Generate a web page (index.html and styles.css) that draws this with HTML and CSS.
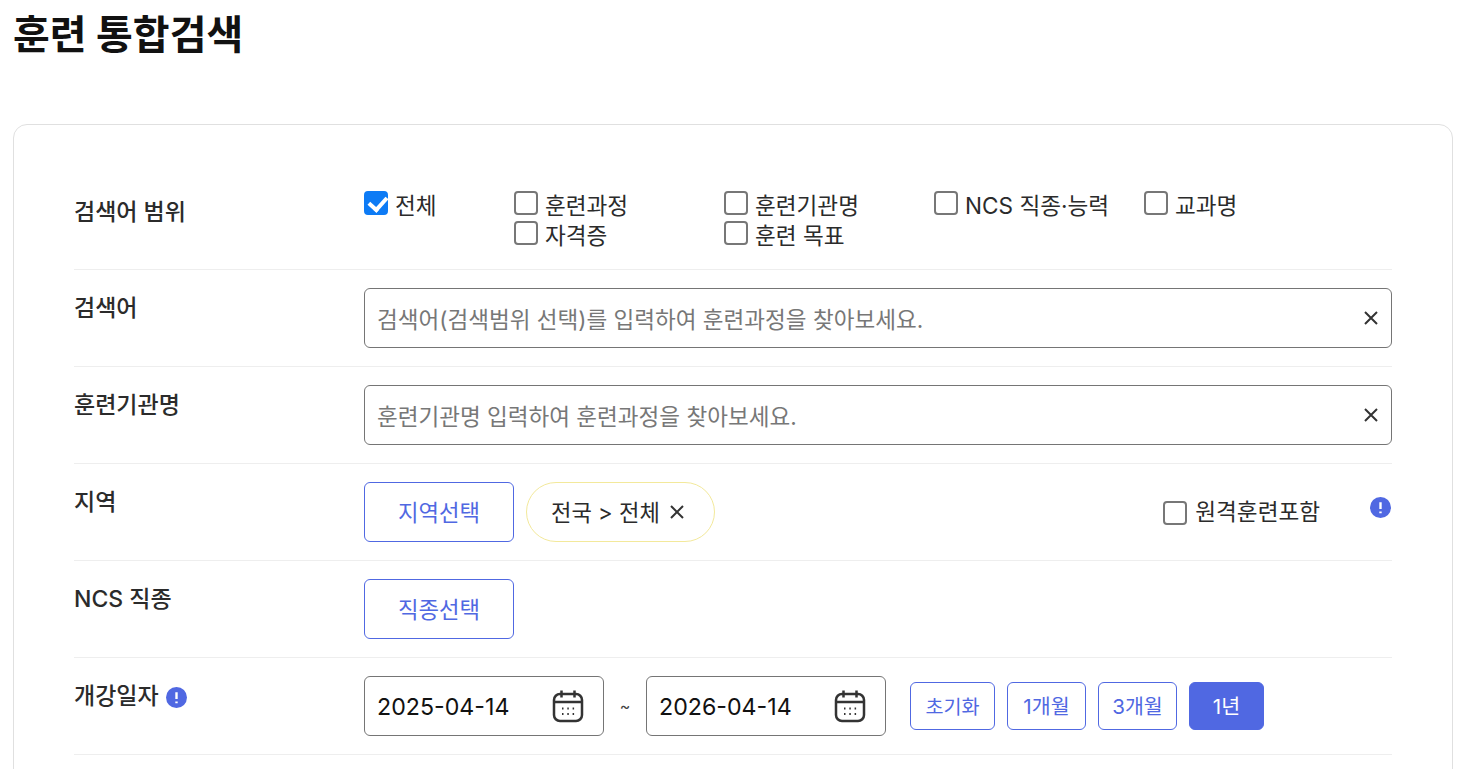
FILE: index.html
```html
<!DOCTYPE html>
<html lang="ko">
<head>
<meta charset="utf-8">
<title>훈련 통합검색</title>
<link rel="stylesheet" href="styles.css">
</head>
<body>
<main class="page">
  <h1 class="title">훈련 통합검색</h1>
  <form class="card">
    <div class="row row-scope">
      <div class="label">검색어 범위</div>
      <div class="scope">
        <label class="check"><input type="checkbox" checked><span>전체</span></label>
        <div class="scope-grid">
          <label class="check"><input type="checkbox"><span>훈련과정</span></label>
          <label class="check"><input type="checkbox"><span>훈련기관명</span></label>
          <label class="check"><input type="checkbox"><span>NCS 직종·능력</span></label>
          <label class="check"><input type="checkbox"><span>교과명</span></label>
          <label class="check"><input type="checkbox"><span>자격증</span></label>
          <label class="check"><input type="checkbox"><span>훈련 목표</span></label>
        </div>
      </div>
    </div>
    <div class="row">
      <div class="label">검색어</div>
      <div class="field">
        <span class="placeholder">검색어(검색범위 선택)를 입력하여 훈련과정을 찾아보세요.</span>
        <svg class="clear" viewBox="0 0 14 14"><path d="M1 1l12 12M13 1L1 13"/></svg>
      </div>
    </div>
    <div class="row">
      <div class="label">훈련기관명</div>
      <div class="field">
        <span class="placeholder">훈련기관명 입력하여 훈련과정을 찾아보세요.</span>
        <svg class="clear" viewBox="0 0 14 14"><path d="M1 1l12 12M13 1L1 13"/></svg>
      </div>
    </div>
    <div class="row">
      <div class="label">지역</div>
      <div class="controls">
        <button type="button" class="pick">지역선택</button>
        <span class="tag">전국 &gt; 전체<svg class="clear" viewBox="0 0 14 14"><path d="M1 1l12 12M13 1L1 13"/></svg></span>
        <label class="check remote"><input type="checkbox"><span>원격훈련포함</span></label>
        <svg class="info info-remote" viewBox="0 0 22 22"><circle cx="11" cy="11" r="11"/><path class="bang" d="M11 5.500v7M11 15.200v1.800"/></svg>
      </div>
    </div>
    <div class="row">
      <div class="label">NCS 직종</div>
      <div class="controls">
        <button type="button" class="pick">직종선택</button>
      </div>
    </div>
    <div class="row">
      <div class="label">개강일자<svg class="info info-label" viewBox="0 0 22 22"><circle cx="11" cy="11" r="11"/><path class="bang" d="M11 5.500v7M11 15.200v1.800"/></svg></div>
      <div class="controls">
        <div class="date"><span class="date-text">2025-04-14</span>
          <svg class="cal" viewBox="0 0 32 34"><rect x="2" y="5" width="28" height="27" rx="6"/><path d="M2 13h28M9.500 1.500v7M22.500 1.500v7"/><path class="dots" d="M10 19.500h1.500M15.300 19.500h1.500M20.600 19.500h1.500M10 25h1.500M15.300 25h1.500M20.600 25h1.500"/></svg>
        </div>
        <span class="tilde">~</span>
        <div class="date"><span class="date-text">2026-04-14</span>
          <svg class="cal" viewBox="0 0 32 34"><rect x="2" y="5" width="28" height="27" rx="6"/><path d="M2 13h28M9.500 1.500v7M22.500 1.500v7"/><path class="dots" d="M10 19.500h1.500M15.300 19.500h1.500M20.600 19.500h1.500M10 25h1.500M15.300 25h1.500M20.600 25h1.500"/></svg>
        </div>
        <div class="ranges">
          <button type="button" class="range range-reset">초기화</button>
          <button type="button" class="range">1개월</button>
          <button type="button" class="range">3개월</button>
          <button type="button" class="range range-on">1년</button>
        </div>
      </div>
    </div>
  </form>
</main>
</body>
</html>
```
FILE: styles.css
```css
* { box-sizing: border-box; }
html, body { margin: 0; height: 769px; overflow: hidden; background: #fff; }
body { font-family: Inter, "Noto Sans CJK KR", "Noto Sans", sans-serif; color: #222; }
.page { padding: 0 19px 0 13px; }
.title { margin: 0; height: 124px; padding-top: 8px; font-size: 40px; line-height: 54px; font-weight: 700; color: #111; }
.card { border: 1px solid #e0e0e0; border-radius: 14px; padding: 47px 60px 200px; }
.row { display: flex; padding: 18px 0; border-bottom: 1px solid #eee; min-height: 97px; }
.row-scope { min-height: 98px; padding-bottom: 19px; }
.label { width: 290px; flex: none; font-size: 23px; line-height: 41px; font-weight: 500; color: #2b2b2b; display: flex; align-items: flex-start; }
.row-scope .label { line-height: 44px; }
.scope { display: flex; align-items: flex-start; height: 60px; }
.scope > .check { width: 150px; }
.scope-grid { display: grid; grid-template-columns: 210px 210px 210px auto; }
.check { display: flex; align-items: center; height: 30px; font-size: 22.600px; line-height: 28px; gap: 7px; color: #2b2b2b; }
.check span { position: relative; top: 1px; }
.check input { appearance: none; margin: 0; width: 24px; height: 24px; flex: none; border: 2px solid #777; border-radius: 4px; background: #fff; position: relative; top: -2px; }
.check input:checked { border-color: #0d7bf5; background: #0d7bf5; }
.check input:checked::after { content: ""; position: absolute; left: 6px; top: 0; width: 8px; height: 14px; border: solid #fff; border-width: 0 4px 4px 0; transform: rotate(42deg); }
.field { flex: 1; height: 60px; border: 1px solid #757575; border-radius: 6px; display: flex; align-items: center; justify-content: space-between; padding: 0 13px 0 12px; }
.placeholder { font-size: 22.550px; color: #777; }
.clear { width: 14px; height: 14px; fill: none; stroke: #333; stroke-width: 2; flex: none; }
.controls { flex: 1; display: flex; align-items: center; height: 60px; }
.pick { width: 150px; height: 60px; border: 1px solid #5068e2; border-radius: 6px; background: #fff; color: #5068e2; font: inherit; font-size: 22.300px; padding: 0 0 2px; }
.tag { display: flex; align-items: center; gap: 10px; height: 60px; margin-left: 12px; padding: 0 30px 2px 24px; border: 1px solid #f3e99b; border-radius: 30px; font-size: 22.200px; color: #2b2b2b; }
.tag .clear { width: 14px; height: 14px; margin-top: 2px; }
.remote { margin-left: auto; margin-right: 50px; gap: 8px; }
.remote input { top: 1px; }
.remote span { top: 0; }
.info { fill: #5068e2; flex: none; width: 21px; height: 21px; }
.bang { stroke: #fff; stroke-width: 2.500; fill: none; }
.info-remote { margin-top: -10px; margin-right: 1px; }
.info-label { margin: 11px 0 0 7px; }
.date { width: 240px; height: 60px; border: 1px solid #757575; border-radius: 6px; display: flex; align-items: center; justify-content: space-between; padding: 0 19px 0 12px; font-size: 23.200px; color: #111; }
.date-text { position: relative; top: 1px; }
.cal { width: 32px; height: 34px; fill: none; stroke: #333; stroke-width: 2.500; }
.cal .dots { stroke-width: 2; }
.tilde { width: 42px; text-align: center; font-size: 16px; color: #444; }
.ranges { display: flex; gap: 12px; margin-left: 24px; }
.range { width: 79px; height: 48px; border: 1px solid #5068e2; border-radius: 6px; background: #fff; color: #5068e2; font: inherit; font-size: 20.600px; padding: 0 0 2px; }
.range-reset { width: 85px; font-size: 19.600px; }
.range-on { width: 75px; background: #5068e2; color: #fff; }
```
